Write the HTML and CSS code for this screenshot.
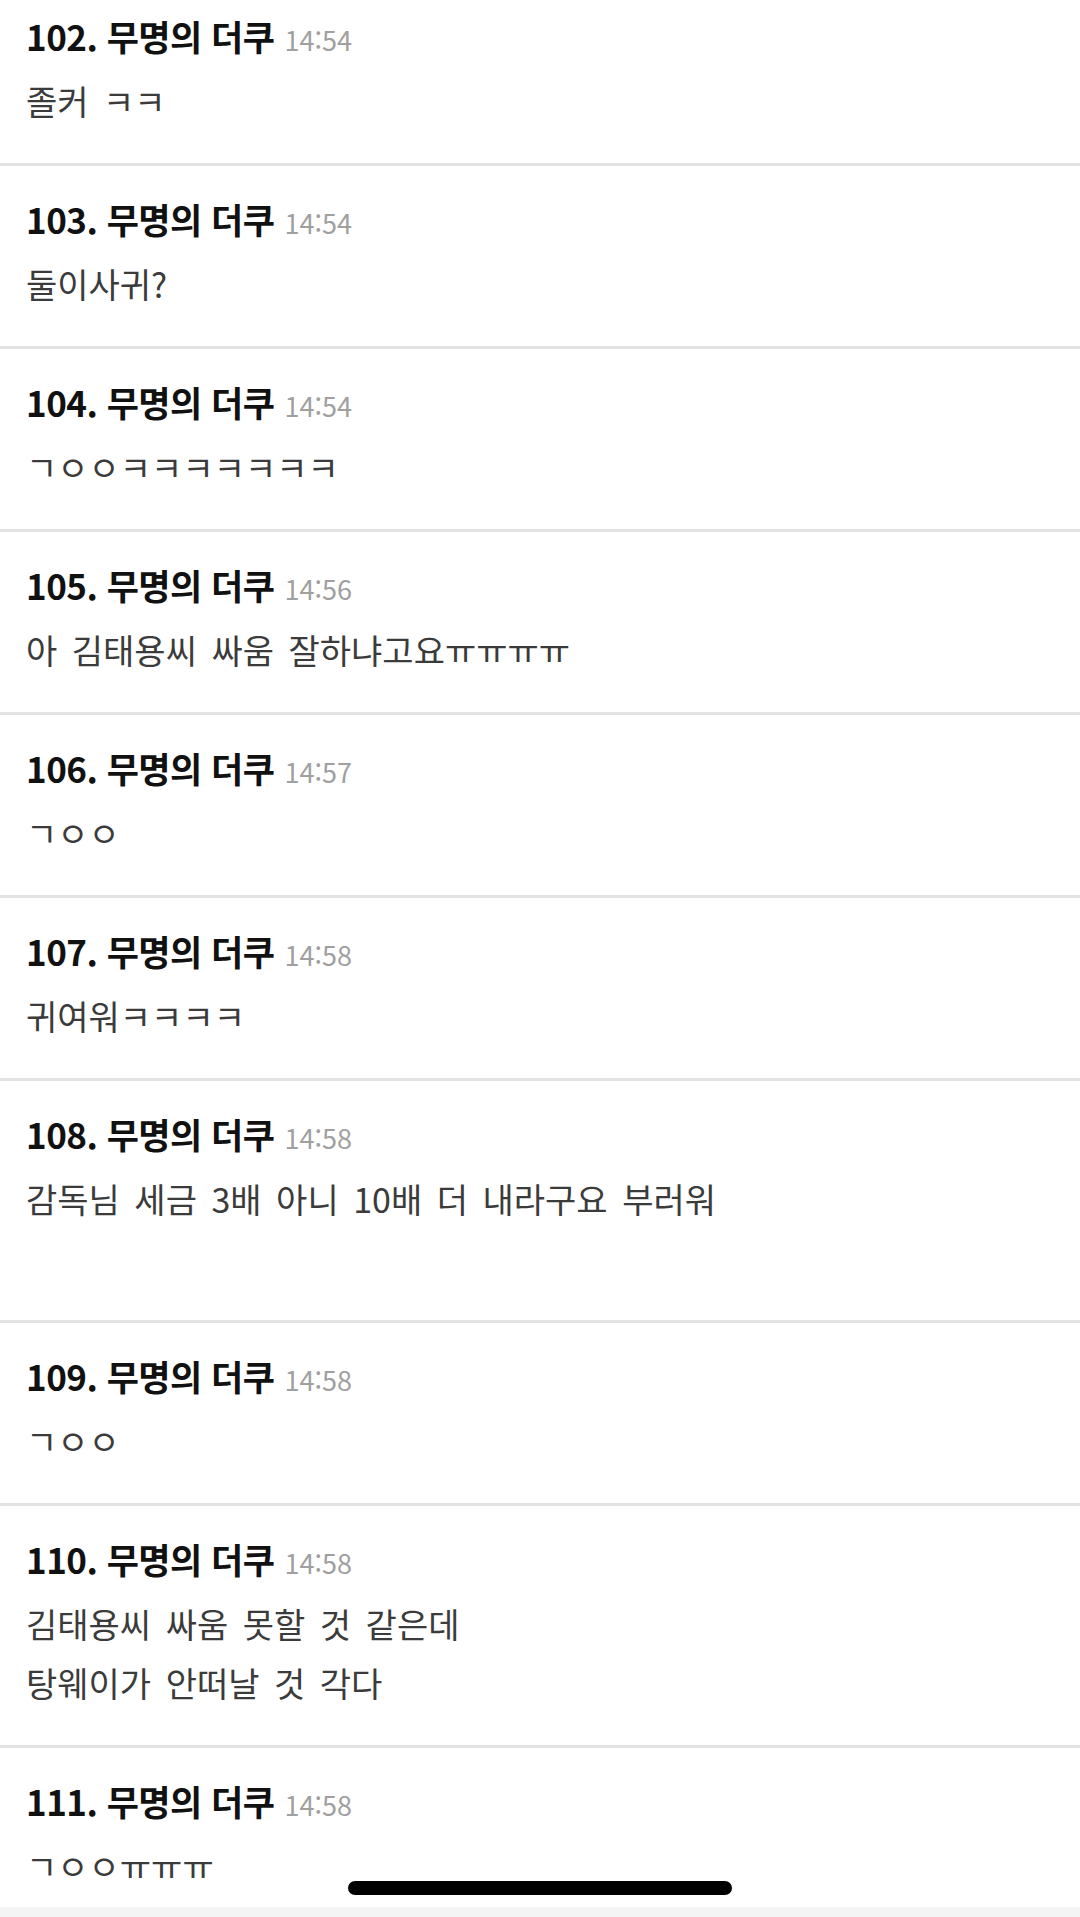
FILE: index.html
```html
<!DOCTYPE html>
<html lang="ko">
<head>
    <meta charset="UTF-8">
    <title>무명의 더쿠</title>
    <link rel="stylesheet" href="styles.css">
</head>
<body>
    <div class="thread">
        <div class="reply">
            <div class="reply-head">102. 무명의 더쿠<span class="time">14:54</span></div>
            <div class="reply-body">졸커 ㅋㅋ</div>
        </div>
        <div class="reply">
            <div class="reply-head">103. 무명의 더쿠<span class="time">14:54</span></div>
            <div class="reply-body">둘이사귀?</div>
        </div>
        <div class="reply">
            <div class="reply-head">104. 무명의 더쿠<span class="time">14:54</span></div>
            <div class="reply-body">ㄱㅇㅇㅋㅋㅋㅋㅋㅋㅋ</div>
        </div>
        <div class="reply">
            <div class="reply-head">105. 무명의 더쿠<span class="time">14:56</span></div>
            <div class="reply-body">아 김태용씨 싸움 잘하냐고요ㅠㅠㅠㅠ</div>
        </div>
        <div class="reply">
            <div class="reply-head">106. 무명의 더쿠<span class="time">14:57</span></div>
            <div class="reply-body">ㄱㅇㅇ</div>
        </div>
        <div class="reply">
            <div class="reply-head">107. 무명의 더쿠<span class="time">14:58</span></div>
            <div class="reply-body">귀여워ㅋㅋㅋㅋ</div>
        </div>
        <div class="reply">
            <div class="reply-head">108. 무명의 더쿠<span class="time">14:58</span></div>
            <div class="reply-body">감독님 세금 3배 아니 10배 더 내라구요 부러워<br>&nbsp;</div>
        </div>
        <div class="reply">
            <div class="reply-head">109. 무명의 더쿠<span class="time">14:58</span></div>
            <div class="reply-body">ㄱㅇㅇ</div>
        </div>
        <div class="reply">
            <div class="reply-head">110. 무명의 더쿠<span class="time">14:58</span></div>
            <div class="reply-body">김태용씨 싸움 못할 것 같은데<br>탕웨이가 안떠날 것 각다</div>
        </div>
        <div class="reply">
            <div class="reply-head">111. 무명의 더쿠<span class="time">14:58</span></div>
            <div class="reply-body">ㄱㅇㅇㅠㅠㅠ</div>
        </div>
    </div>

    <div class="home-bar"><span class="home-indicator"></span></div>
</body>
</html>
```

FILE: styles.css
```css
body {
    margin: 0;
    padding: 0;
    background-color: #fff;
    font-family: 'Noto Sans CJK KR', 'Noto Sans', sans-serif;
    overflow: hidden;
}

/* page is scrolled a bit, first reply's top border is off screen */
.thread {
    margin-top: -20px;
}

.reply {
    border-top: 3px solid #e2e2e2;
    padding: 30px 26px 33px 26px;
}

.reply-head {
    font-size: 35px;
    font-weight: bold;
    color: #111;
    line-height: 46px;
    height: 46px;
    letter-spacing: -0.5px;
}

.reply-head .time {
    font-size: 27px;
    font-weight: normal;
    line-height: 1;
    color: #a0a0a0;
    margin-left: 10px;
    letter-spacing: 0;
}

.reply-body {
    margin-top: 12px;
    font-size: 34px;
    color: #3b3b3b;
    line-height: 59px;
    word-spacing: 5px;
}

.home-bar {
    position: fixed;
    left: 0;
    right: 0;
    bottom: 0;
    height: 36px;
    display: flex;
    justify-content: center;
    background: linear-gradient(to bottom, rgba(255,255,255,0) 0, rgba(255,255,255,0) 25px, #f4f4f4 27px);
}

.home-indicator {
    width: 384px;
    height: 14px;
    border-radius: 7px;
    background-color: #000;
}
```
